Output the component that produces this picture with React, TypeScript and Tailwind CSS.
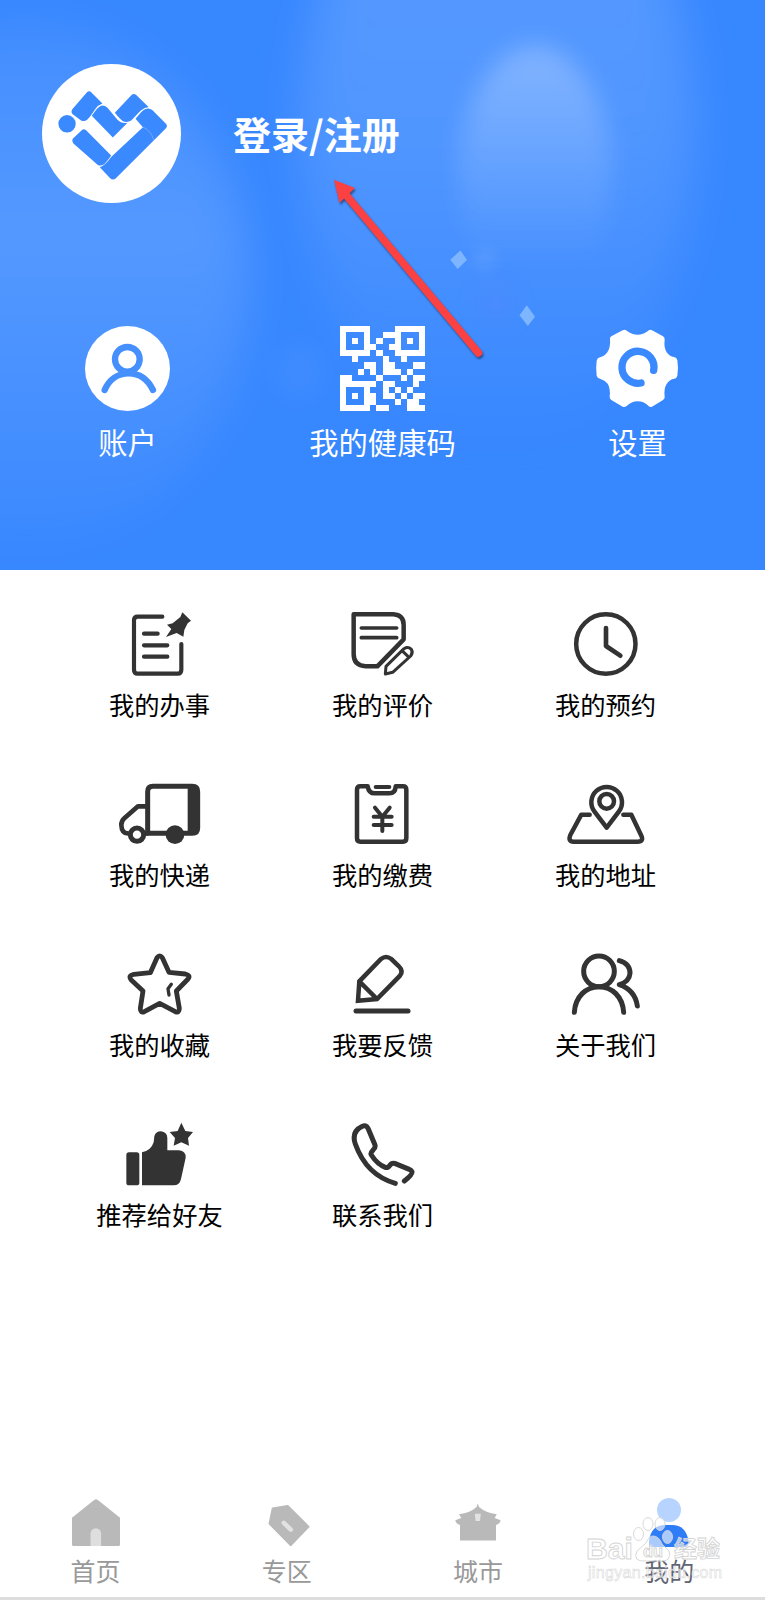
import React from 'react';

interface MenuItem {
  label: string;
  icon: React.ReactNode;
}

interface MenuIconProps {
  viewBox: string;
  children: React.ReactNode;
}

const MenuIcon: React.FC<MenuIconProps> = ({ viewBox, children }) => (
  <svg
    viewBox={viewBox}
    className="w-[85px] h-[65px]"
    fill="none"
    stroke="#333333"
    strokeWidth="13.5"
    strokeLinecap="round"
    strokeLinejoin="round"
  >
    {children}
  </svg>
);

const menuItems: MenuItem[] = [
  {
    label: '我的办事',
    icon: (
      <MenuIcon viewBox="50 48 255 195">
        <path d="M186 65H112Q101 65 101 76V224Q101 236 112 236H232Q243 236 243 224V147M131 116H172M131 151H201M131 185H201" strokeWidth="12.5" />
        <path
          d="M246 52L272 77L262 85L252 105L249 125L229 114L197 126L213 102L200 89L217 85L240 66Z"
          fill="#333333"
          stroke="none"
        />
      </MenuIcon>
    ),
  },
  {
    label: '我的评价',
    icon: (
      <MenuIcon viewBox="720 48 255 195">
        <path d="M761 58H880Q911 60 911 90V133L832 214H797Q761 212 761 178Z" />
        <path d="M784 99H890M784 128H890" strokeWidth="11" />
        <path d="M856 237L858 214L912 161Q924 153 934 163Q940 173 932 183L878 232ZM906 167L927 187" strokeWidth="9" />
      </MenuIcon>
    ),
  },
  {
    label: '我的预约',
    icon: (
      <MenuIcon viewBox="69 48 255 195">
        <circle cx="197.5" cy="147" r="89" />
        <path d="M198 99V153L241 182" strokeWidth="14" />
      </MenuIcon>
    ),
  },
  {
    label: '我的快递',
    icon: (
      <MenuIcon viewBox="50 48 255 195">
        <path d="M142 205V80Q142 64 158 64H276Q292 64 292 80V189Q292 205 276 205Z" strokeWidth="15" />
        <path d="M262 64H280Q292 66 292 80V190Q292 203 280 205H262Z" fill="#333333" stroke="none" />
        <path d="M142 124H113L72 160Q63 168 63 180Q64 205 82 205M137 205H142" strokeWidth="14" />
        <circle cx="110" cy="209" r="20" strokeWidth="15" fill="#ffffff" />
        <circle cx="224" cy="209" r="28" fill="#333333" stroke="none" />
      </MenuIcon>
    ),
  },
  {
    label: '我的缴费',
    icon: (
      <MenuIcon viewBox="720 48 255 195">
        <path d="M803 64H781Q771 64 771 74V220Q771 230 781 230H909Q919 230 919 220V74Q919 64 909 64H887Q886 85 868 85H824Q806 85 803 64" />
        <path d="M827 66H868" strokeWidth="12" />
        <path d="M825 128L847 155L869 128M847 155V198M821 155H875M821 180H875" strokeWidth="12" />
      </MenuIcon>
    ),
  },
  {
    label: '我的地址',
    icon: (
      <MenuIcon viewBox="69 558 255 195">
        <path d="M200 698L163 649A46 46 0 1 1 237 649Z" />
        <circle cx="200" cy="619" r="22" />
        <path d="M149 659H124L91 720Q83 740 101 740H293Q312 740 304 722L274 659H250" />
      </MenuIcon>
    ),
  },
  {
    label: '我的收藏',
    icon: (
      <MenuIcon viewBox="80 48 255 195">
        <path
          d="M200 68Q208 57 216 68L236 112L285 117Q302 121 293 132L258 168L267 220Q267 235 255 230L208 205L162 230Q150 235 150 220L158 168L122 134Q113 121 130 118L180 113Z"
          strokeWidth="14.5"
        />
        <path d="M243 148L233 161L236 180" strokeWidth="10" />
      </MenuIcon>
    ),
  },
  {
    label: '我要反馈',
    icon: (
      <MenuIcon viewBox="750 48 255 195">
        <path d="M804 197L808 139L873 72Q888 60 904 72L926 93Q941 108 930 122L861 192ZM808 139L861 192" strokeLinejoin="miter" />
        <path d="M798 228H954" strokeWidth="15" />
      </MenuIcon>
    ),
  },
  {
    label: '关于我们',
    icon: (
      <MenuIcon viewBox="69 48 255 195">
        <circle cx="177" cy="109" r="46" strokeWidth="15" />
        <path d="M103 232C106 185 138 155 177 155C216 155 248 185 251 232" strokeWidth="15" />
        <path d="M238 77Q270 86 270 115Q268 140 238 149Q285 165 292 213" strokeWidth="15" />
      </MenuIcon>
    ),
  },
  {
    label: '推荐给好友',
    icon: (
      <MenuIcon viewBox="80 48 255 195">
        <g fill="#333333" stroke="none">
          <rect x="108" y="142" width="39" height="99" rx="8" />
          <path d="M155 142Q182 137 190 112L192 94Q196 79 212 79Q230 81 231 98V136H266Q287 138 286 158L272 222Q268 241 250 241H155Z" />
          <path d="M273 53L285 78L308 81L293 99L296 122L273 112L250 122L254 99L238 81L262 78Z" />
        </g>
      </MenuIcon>
    ),
  },
  {
    label: '联系我们',
    icon: (
      <MenuIcon viewBox="750 48 255 195">
        <path
          d="M943 228Q968 209 966 200Q964 195 958 193L914 175Q906 173 901 179Q893 190 886 187Q862 178 844 150Q840 144 850 134Q857 128 855 120L834 70Q828 58 817 64Q783 80 796 117Q829 210 916 235"
          strokeWidth="15"
        />
      </MenuIcon>
    ),
  },
];

const qrRows = [
  '11111000011111',
  '10001001110001',
  '10101010010101',
  '10001100110001',
  '11111010011111',
  '00100001001000',
  '00001101100011',
  '00010101110100',
  '11000010001011',
  '11111101100010',
  '10001001010100',
  '10101101101011',
  '10001100010110',
  '11111011000111',
];

const QrIcon: React.FC = () => (
  <svg viewBox="0 0 14 14" className="w-[85px] h-[85px]" fill="#ffffff" shapeRendering="crispEdges">
    {qrRows.map((row, y) =>
      row.split('').map((cell, x) =>
        cell === '1' ? <rect key={`${x}-${y}`} x={x} y={y} width="1" height="1" /> : null
      )
    )}
  </svg>
);

const AccountIcon: React.FC = () => (
  <svg viewBox="45 48 255 255" className="w-[85px] h-[85px]" fill="none" stroke="#4590fd" strokeWidth="19" strokeLinecap="round">
    <circle cx="172.5" cy="175.5" r="127.5" fill="#ffffff" stroke="none" />
    <circle cx="172" cy="148" r="37" />
    <path d="M104 240C118 207 145 190 176 190C207 190 233 207 249 240" />
  </svg>
);

const GearIcon: React.FC = () => (
  <svg viewBox="75 48 255 255" className="w-[85px] h-[85px]">
    <path
      fill="#ffffff"
      d="M120 88Q119 82 124 79L158 61Q165 57 170 62Q186 74 203 74Q220 74 234 63Q240 57 246 61L279 79Q285 83 284 90Q281 112 290 127Q298 139 312 141Q320 142 322 150Q326 175 322 197Q320 205 313 206Q298 208 290 222Q281 236 284 260Q285 266 279 270L246 290Q240 293 235 287Q221 274 203 274Q184 274 170 288Q164 293 158 290L124 270Q118 266 119 260Q122 235 113 221Q105 210 90 206Q82 204 80 197Q77 175 80 152Q82 143 90 142Q104 139 112 127Q122 112 120 88Z"
    />
    <path d="M213 219A48 48 0 1 1 251 181" fill="none" stroke="#3b89fe" strokeWidth="22" strokeLinecap="round" />
  </svg>
);

const Logo: React.FC = () => (
  <svg viewBox="36 42 416 416" className="w-[139px] h-[139px]" fill="#3a89ff">
    <circle cx="244" cy="250" r="208" fill="#ffffff" />
    <circle cx="111" cy="221" r="26" />
    <path d="M126 178L170 127Q177 120 184 127L217 160Q205 164 196 176Q182 198 172 208Q162 216 152 210L127 192Q122 185 126 178Z" />
    <path d="M217 166Q205 168 196 182L185 197L248 262L292 218Q272 222 258 204L232 173Q224 166 217 166Z" />
    <path d="M254 188L304 135Q311 129 318 135L355 171Q342 172 330 183L303 211Q292 218 280 214Q270 208 254 188Z" />
    <path d="M351 175Q340 177 332 187L316 206L338 231L243 320Q226 344 209 351L240 384Q248 391 257 384L407 234Q413 228 407 221L366 180Q360 174 351 175Z" />
    <path d="M338 231Q364 242 370 270" fill="none" stroke="#ffffff" strokeOpacity="0.5" strokeWidth="1.5" />
    <path d="M128 266L155 240Q161 234 168 240L243 316Q230 335 222 342Q212 348 204 345L130 280Q124 273 128 266Z" />
  </svg>
);

const shortcuts: MenuItem[] = [
  { label: '账户', icon: <AccountIcon /> },
  { label: '我的健康码', icon: <QrIcon /> },
  { label: '设置', icon: <GearIcon /> },
];

const tabs: (MenuItem & { active?: boolean })[] = [
  {
    label: '首页',
    icon: (
      <svg viewBox="0 0 48 50" className="w-12 h-[50px]">
        <path d="M22.5 1.8Q24 .6 25.5 1.8L48 19.8V46.5Q48 48 46.5 48H1.5Q0 48 0 46.5V19.8Z" fill="#b9b9b9" />
        <path d="M18.5 48V35.5A5.3 5.3 0 0 1 29.1 35.5V48Z" fill="#dedede" />
      </svg>
    ),
  },
  {
    label: '专区',
    icon: (
      <svg viewBox="0 0 48 50" className="w-12 h-[50px]">
        <path
          d="M9.5 10.2L24.8 7.8L45.8 28.7L27.7 47.4L6.3 25.7Z"
          fill="#b9b9b9"
          stroke="#b9b9b9"
          strokeWidth="1.5"
          strokeLinejoin="round"
        />
        <path d="M20.8 24.8L27.8 31.6" stroke="#e2e2e2" strokeWidth="4.5" strokeLinecap="round" />
      </svg>
    ),
  },
  {
    label: '城市',
    icon: (
      <svg viewBox="0 0 48 50" className="w-12 h-[50px]">
        <path
          d="M23.8 5.5L25 9Q32 15 42.8 16.3L40.6 20L46.6 22.3Q46 26 42 27V42.5H6V27Q2 26 1.3 22.3L7.3 20L5 16.3Q16 15 22.6 9Z"
          fill="#b9b9b9"
        />
        <path d="M20.8 15.8H26.8L26 23H21.6Z" fill="#e2e2e2" />
      </svg>
    ),
  },
  {
    label: '我的',
    active: true,
    icon: (
      <svg viewBox="0 0 48 50" className="w-12 h-[50px]">
        <circle cx="24" cy="12" r="12" fill="#b7d3ff" />
        <path d="M4 49V43Q6 27 20 27H27Q41 27 43.5 43V45Q43 49 40 49Z" fill="#2f7cf8" />
      </svg>
    ),
  },
];

const HeaderBackdrop: React.FC = () => (
  <div className="absolute inset-0 overflow-hidden pointer-events-none">
    <div className="absolute -left-[200px] top-[20px] w-[450px] h-[530px] rounded-[50%] bg-linear-to-b from-white/6 via-white/15 via-40% to-white/2 blur-xl" />
    <div className="absolute left-[300px] -top-[190px] w-[395px] h-[650px] rounded-[50%] bg-linear-to-b from-white/17 via-white/13 via-50% to-white/0 blur-xl" />
    <div className="absolute left-[458px] top-[46px] w-[154px] h-[260px] rounded-[50%] bg-linear-to-b from-white/28 to-white/0 to-85% blur-md" />
    <div className="absolute left-[272px] top-[340px] w-[54px] h-[62px] rounded-full bg-white/4 blur-md" />
    <div className="absolute left-[480px] top-[284px] w-[32px] h-[38px] rounded-full bg-[#7a7cf0]/15 blur-md" />
    <div className="absolute left-[476px] top-[248px] w-[18px] h-[24px] rounded-full bg-white/10 blur-sm" />
    <svg viewBox="0 0 765 570" className="absolute inset-0 w-full h-full">
      <path d="M460.5 250.5L467 260L457.6 269L450.3 259.7ZM526.8 305.3L535 316.7L527.8 326L519.5 315.2Z" fill="#7db5ff" />
    </svg>
  </div>
);

const Arrow: React.FC = () => (
  <svg
    viewBox="0 0 160 190"
    className="absolute left-[328px] top-[174px] w-[160px] h-[190px] drop-shadow-[1px_2px_1px_rgba(0,0,0,0.45)]"
  >
    <path d="M18 21L150.5 179" stroke="#fc4142" strokeWidth="7.5" strokeLinecap="round" />
    <path d="M6 5.8L27 14L11.5 29Z" fill="#fc4142" />
  </svg>
);

const Watermark: React.FC = () => (
  <svg
    viewBox="0 0 150 80"
    className="absolute left-[580px] top-[1512px] w-[150px] h-[80px] pointer-events-none"
    fill="#ffffff"
    fillOpacity="0.6"
    stroke="#d4d4d4"
    strokeWidth="0.9"
    fontFamily='"Liberation Sans", "Noto Sans CJK SC", sans-serif'
  >
    <ellipse cx="58.5" cy="22" rx="5" ry="6.5" />
    <ellipse cx="68" cy="12" rx="5" ry="6.5" />
    <ellipse cx="80" cy="12" rx="5" ry="6.5" />
    <ellipse cx="87.5" cy="25" rx="5" ry="6.5" />
    <path d="M73 24Q79 24 82 32L89 39Q92 50 80 49H66Q52 50 57 39L66 31Q69 24 73 24Z" />
    <text x="6" y="47" fontSize="30" fontWeight="700" textLength="47" lengthAdjust="spacingAndGlyphs">Bai</text>
    <text x="63" y="45" fontSize="17" fontWeight="700" textLength="20" lengthAdjust="spacingAndGlyphs">du</text>
    <text x="94" y="45" fontSize="23" fontWeight="700" textLength="46">经验</text>
    <text x="8" y="66" fontSize="16" textLength="134" strokeWidth="0.5">jingyan.baidu.com</text>
  </svg>
);

export default function App() {
  return (
    <div className="relative flex flex-col w-[765px] h-[1600px] bg-white overflow-hidden font-['Noto_Sans_CJK_SC',sans-serif]">
      <header className="relative h-[570px] bg-[#3787ff] text-white">
        <HeaderBackdrop />
        <div className="relative flex items-center pt-16 pl-[42px] gap-[52px]">
          <Logo />
          <h1 className="text-[38px] font-bold leading-none pb-0.5">登录/注册</h1>
        </div>
        <div className="relative grid grid-cols-3 mt-[123px]">
          {shortcuts.map((item) => (
            <div key={item.label} className="flex flex-col items-center gap-2.5">
              {item.icon}
              <span className="text-[29.3px] leading-10">{item.label}</span>
            </div>
          ))}
        </div>
        <Arrow />
      </header>

      <main className="grid grid-cols-3 gap-y-[59px] px-12 pt-[41px]">
        {menuItems.map((item) => (
          <div key={item.label} className="flex flex-col items-center gap-2.5">
            {item.icon}
            <span className="text-[25.3px] leading-9 text-black">{item.label}</span>
          </div>
        ))}
      </main>

      <nav className="grid grid-cols-4 mt-auto pb-[11px] border-b-[3px] border-[#dddddd]">
        {tabs.map((tab) => (
          <div key={tab.label} className="flex flex-col items-center gap-1.5">
            {tab.icon}
            <span className={tab.active ? 'text-[25px] leading-8 text-[#5f6472]' : 'text-[25px] leading-8 text-[#999999]'}>
              {tab.label}
            </span>
          </div>
        ))}
      </nav>
      <Watermark />
    </div>
  );
}
